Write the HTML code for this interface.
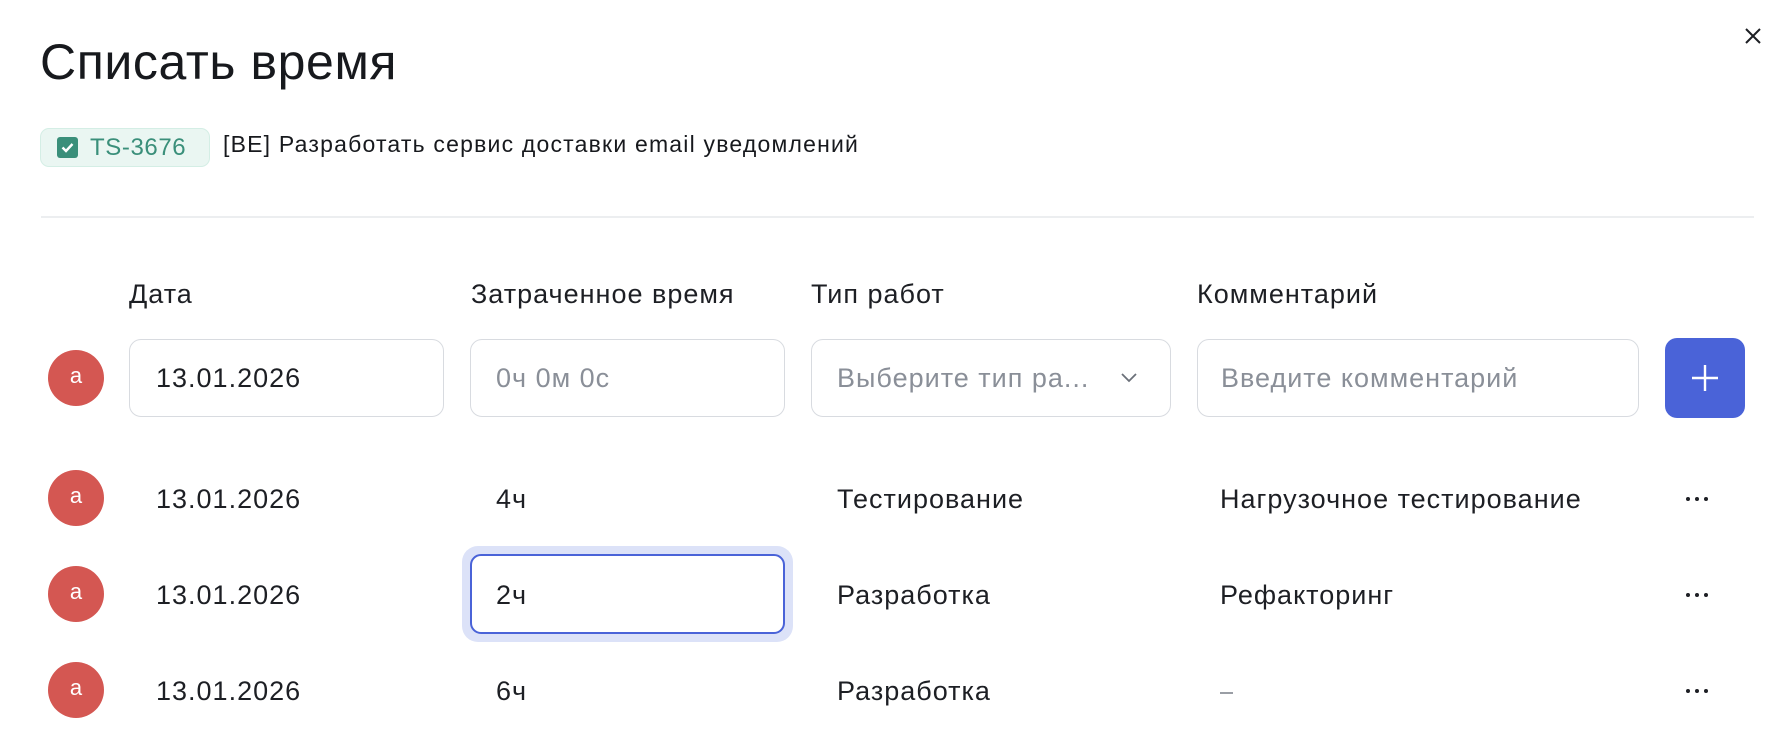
<!DOCTYPE html>
<html><head><meta charset="utf-8"><style>
*{box-sizing:border-box;margin:0;padding:0}
body{width:1792px;height:756px;background:#fff;position:relative;overflow:hidden;font-family:"Liberation Sans","DejaVu Sans",sans-serif;color:#1d1f24}
.a{position:absolute}
.t{position:absolute;white-space:nowrap;line-height:1}
.av{position:absolute;left:48px;width:56px;height:56px;border-radius:50%;background:#d45752;color:#fff;font-size:22px;text-align:center;line-height:52px}
.in{position:absolute;top:339px;height:78px;border:1.5px solid #d8dbe0;border-radius:12px;background:#fff}
.ph{color:#8a8f98}
.f25{font-size:27px;letter-spacing:1px}
.dots{position:absolute;left:1686px;width:24px;height:6px}
.dots i{position:absolute;top:0;width:4px;height:4px;border-radius:50%;background:#1d1f24}
</style></head><body>
<div class="t" style="left:40px;top:37px;font-size:50px;letter-spacing:0.6px;color:#17191d">Списать время</div>
<svg class="a" style="left:1744px;top:27px" width="18" height="18" viewBox="0 0 18 18"><path d="M2 2L16 16M16 2L2 16" stroke="#1d1f24" stroke-width="2"/></svg>

<div class="a" style="left:40px;top:128px;width:170px;height:39px;background:#eaf6f2;border:1.5px solid #d4eee5;border-radius:9px"></div>
<svg class="a" style="left:57px;top:137px" width="21" height="21" viewBox="0 0 21 21"><rect width="21" height="21" rx="3" fill="#3a8f7a"/><path d="M5.5 10.5l3.5 3.5 6.5-7" stroke="#fff" stroke-width="2.4" fill="none"/></svg>
<div class="t" style="left:90px;top:136px;font-size:24px;letter-spacing:0.6px;color:#3a8f7a">TS-3676</div>
<div class="t" style="left:223px;top:133px;font-size:23px;letter-spacing:1.2px;color:#17191d">[BE] Разработать сервис доставки email уведомлений</div>

<div class="a" style="left:41px;top:216px;width:1713px;height:2px;background:#eceef0"></div>

<div class="t f25" style="left:129px;top:281px">Дата</div>
<div class="t f25" style="left:471px;top:281px">Затраченное время</div>
<div class="t f25" style="left:811px;top:281px">Тип работ</div>
<div class="t f25" style="left:1197px;top:281px">Комментарий</div>

<div class="av" style="top:350px">a</div>
<div class="in" style="left:129px;width:315px"></div>
<div class="t f25" style="left:156px;top:365px">13.01.2026</div>
<div class="in" style="left:470px;width:315px"></div>
<div class="t f25 ph" style="left:496px;top:365px">0ч 0м 0с</div>
<div class="in" style="left:811px;width:360px"></div>
<div class="t f25 ph" style="left:837px;top:365px">Выберите тип ра...</div>
<svg class="a" style="left:1120px;top:372px" width="18" height="11" viewBox="0 0 18 11"><path d="M2 2l7 7 7-7" stroke="#6b7079" stroke-width="1.8" fill="none"/></svg>
<div class="in" style="left:1197px;width:442px"></div>
<div class="t f25 ph" style="left:1221px;top:365px">Введите комментарий</div>
<div class="a" style="left:1665px;top:338px;width:80px;height:80px;background:#4a63d8;border-radius:12px"></div>
<svg class="a" style="left:1691px;top:364px" width="28" height="28" viewBox="0 0 28 28"><path d="M14 1v26M1 14h26" stroke="#fff" stroke-width="2.4"/></svg>

<div class="av" style="top:470px">a</div>
<div class="t f25" style="left:156px;top:486px">13.01.2026</div>
<div class="t f25" style="left:496px;top:486px">4ч</div>
<div class="t f25" style="left:837px;top:486px">Тестирование</div>
<div class="t f25" style="left:1220px;top:486px">Нагрузочное тестирование</div>
<div class="dots" style="top:497px"><i style="left:0"></i><i style="left:9px"></i><i style="left:18px"></i></div>

<div class="av" style="top:566px">a</div>
<div class="t f25" style="left:156px;top:582px">13.01.2026</div>
<div class="a" style="left:462px;top:546px;width:331px;height:96px;background:#dce2f8;border-radius:16px"></div>
<div class="a" style="left:470px;top:554px;width:315px;height:80px;background:#fff;border:2px solid #4a63d8;border-radius:11px"></div>
<div class="t f25" style="left:496px;top:582px">2ч</div>
<div class="t f25" style="left:837px;top:582px">Разработка</div>
<div class="t f25" style="left:1220px;top:582px">Рефакторинг</div>
<div class="dots" style="top:593px"><i style="left:0"></i><i style="left:9px"></i><i style="left:18px"></i></div>

<div class="av" style="top:662px">a</div>
<div class="t f25" style="left:156px;top:678px">13.01.2026</div>
<div class="t f25" style="left:496px;top:678px">6ч</div>
<div class="t f25" style="left:837px;top:678px">Разработка</div>
<div class="a" style="left:1220px;top:692px;width:13px;height:2px;background:#9a9ea5"></div>
<div class="dots" style="top:689px"><i style="left:0"></i><i style="left:9px"></i><i style="left:18px"></i></div>
</body></html>
